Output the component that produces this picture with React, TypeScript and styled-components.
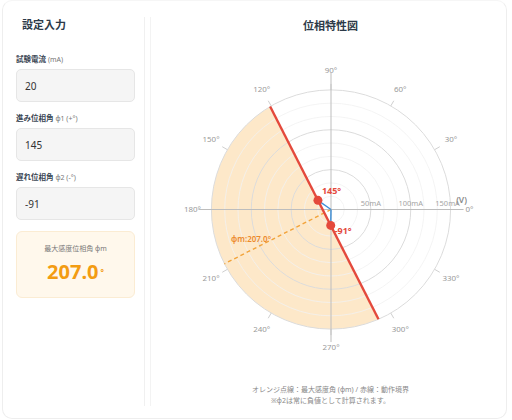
import React from 'react';
import styled, { createGlobalStyle } from 'styled-components';

const GlobalStyle = createGlobalStyle`
  html, body {
    margin: 0;
    padding: 0;
    background: #ffffff;
  }

  body {
    font-family: "Noto Sans", "Noto Sans CJK JP", sans-serif;
    color: #2d3a48;
  }
`;

const Card = styled.div`
  box-sizing: border-box;
  height: 419px;
  margin: 0 5px 0 2px;
  padding: 16px 0 12px;
  display: flex;
  border: 1px solid #eeeeee;
  border-top-color: #f6f6f6;
  border-radius: 10px;
`;

const Sidebar = styled.aside`
  box-sizing: border-box;
  width: 142px;
  padding: 0 9px 0 13px;
  border-right: 1px solid #f0f0f0;
  display: flex;
  flex-direction: column;
`;

const Heading = styled.h2`
  margin: 0 0 21px 6px;
  font-size: 11px;
  line-height: 16px;
  font-weight: 700;
  color: #2d3a48;
`;

const Field = styled.div`
  display: flex;
  flex-direction: column;
  gap: 4px;
  margin-bottom: 11px;
`;

const FieldLabel = styled.label`
  font-size: 7.5px;
  line-height: 10px;
  font-weight: 700;
  color: #3a4654;
`;

const Unit = styled.span`
  font-size: 7px;
  font-weight: 400;
  color: #777;
`;

const Input = styled.input`
  box-sizing: border-box;
  width: 100%;
  height: 33px;
  padding: 0 8px;
  border: 1px solid #e6e6e6;
  border-radius: 5px;
  background: #f5f5f5;
  font-family: "Noto Sans", "Noto Sans CJK JP", sans-serif;
  font-size: 10px;
  color: #333;
  outline: none;
`;

const ResultBox = styled.div`
  box-sizing: border-box;
  height: 67px;
  padding-top: 12px;
  border: 1px solid #fbecd3;
  border-radius: 6px;
  background: #fff8ec;
  display: flex;
  flex-direction: column;
  align-items: center;
  gap: 6px;
`;

const ResultCaption = styled.div`
  font-size: 7px;
  line-height: 10px;
  color: #7a7a7a;
`;

const ResultValue = styled.div`
  display: flex;
  align-items: center;
  font-size: 20px;
  line-height: 24px;
  font-weight: 700;
  color: #f39c12;
`;

const Degree = styled.span`
  font-size: 8px;
  margin-left: 2px;
`;

const ChartPanel = styled.section`
  box-sizing: border-box;
  flex: 1;
  margin-left: 5px;
  padding-left: 4px;
  border-left: 1px solid #f3f3f3;
  display: flex;
  flex-direction: column;
  align-items: center;
`;

const ChartTitle = styled.h2`
  margin: 1px 0 26px;
  font-size: 11px;
  line-height: 16px;
  font-weight: 700;
  color: #2d3a48;
`;

const Notes = styled.div`
  margin-top: 25px;
  display: flex;
  flex-direction: column;
  align-items: center;
`;

const NoteLine = styled.div`
  font-size: 7px;
  line-height: 11px;
  color: #888;
`;

const CX = 160;
const CY = 150;
const R = 120;
const MAX_MA = 150;

const pt = (deg: number, r: number) => {
  const rad = (deg * Math.PI) / 180;
  return { x: CX + r * Math.cos(rad), y: CY - r * Math.sin(rad) };
};

const PhaseChart: React.FC<{ current: number; phi1: number; phi2: number }> = ({ current, phi1, phi2 }) => {
  const scale = R / MAX_MA;
  const r0 = current * scale;
  const p2 = phi2 < 0 ? phi2 + 360 : phi2;
  const phiM = (phi1 + p2) / 2;

  const a = pt(phi1, r0);
  const b = pt(phi2, r0);

  // boundary chord through the two vector tips, clipped to the outer ring
  const d = r0 * Math.cos(((phi1 - p2) / 2) * Math.PI / 180);
  const half = (Math.acos(d / R) * 180) / Math.PI;
  const e1 = pt(phiM - half, R);
  const e2 = pt(phiM + half, R);
  const large = half * 2 > 180 ? 1 : 0;
  const shade = `M ${e1.x} ${e1.y} A ${R} ${R} 0 ${large} 0 ${e2.x} ${e2.y} Z`;

  const mEnd = pt(phiM, R);
  const mLabel = pt(phiM, 90);

  const minor = [1, 2, 4, 5, 7, 8].map((i) => (R / 9) * i);
  const angles = Array.from({ length: 12 }, (_, i) => i * 30);

  return (
    <svg width={320} height={300} viewBox="0 0 320 300">
      <path d={shade} fill="#fde8c9" />

      {minor.map((r) => (
        <circle key={r} cx={CX} cy={CY} r={r} fill="none" stroke="#f1f1f1" strokeWidth={0.8} />
      ))}
      {[40, 80, 120].map((r) => (
        <circle key={r} cx={CX} cy={CY} r={r} fill="none" stroke="#dcdcdc" strokeWidth={1} />
      ))}

      {angles.map((ang) => {
        const t1 = pt(ang, R);
        const t2 = pt(ang, R + 6);
        const lp = pt(ang, 139);
        return (
          <g key={ang}>
            <line x1={t1.x} y1={t1.y} x2={t2.x} y2={t2.y} stroke="#cfcfcf" strokeWidth={1} />
            <text
              x={lp.x}
              y={lp.y}
              textAnchor="middle"
              dominantBaseline="middle"
              fontSize={8}
              fill="#9a9a9a"
            >
              {ang}°
            </text>
          </g>
        );
      })}

      <line x1={CX - 133} y1={CY} x2={CX + 133} y2={CY} stroke="#bdbdbd" strokeWidth={1} />
      <line x1={CX} y1={CY - 137} x2={CX} y2={CY + 133} stroke="#bdbdbd" strokeWidth={1} />

      {[50, 100, 150].map((ma) => (
        <text key={ma} x={CX + ma * scale - (ma === 150 ? 3 : 0)} y={CY - 4} textAnchor="middle" fontSize={7.5} fill="#a5a5a5">
          {ma}mA
        </text>
      ))}
      <text x={CX + 131} y={CY - 7} textAnchor="middle" fontSize={8.5} fontWeight={600} fill="#8a8a8a">
        (V)
      </text>

      <line
        x1={CX}
        y1={CY}
        x2={mEnd.x}
        y2={mEnd.y}
        stroke="#f2a33a"
        strokeWidth={1.4}
        strokeDasharray="4 3"
      />
      <text x={mLabel.x} y={mLabel.y - 8} textAnchor="middle" fontSize={8} fontWeight={600} fill="#ec8a2c">
        φm:{phiM.toFixed(1)}°
      </text>

      <line x1={e1.x} y1={e1.y} x2={e2.x} y2={e2.y} stroke="#e4493c" strokeWidth={2.4} />

      <line x1={CX} y1={CY} x2={a.x} y2={a.y} stroke="#3d8fd8" strokeWidth={1.4} />
      <line x1={CX} y1={CY} x2={b.x} y2={b.y} stroke="#3d8fd8" strokeWidth={1.4} />

      <circle cx={a.x} cy={a.y} r={4.5} fill="#e4493c" />
      <circle cx={b.x} cy={b.y} r={4.5} fill="#e4493c" />
      <text x={a.x + 4} y={a.y - 6} fontSize={9} fontWeight={700} fill="#e4493c">
        {phi1}°
      </text>
      <text x={b.x + 4} y={b.y + 9} fontSize={9} fontWeight={700} fill="#e4493c">
        {phi2}°
      </text>
    </svg>
  );
};

const App: React.FC = () => {
  const current = 20;
  const phi1 = 145;
  const phi2 = -91;
  const phiM = (phi1 + (phi2 < 0 ? phi2 + 360 : phi2)) / 2;

  return (
    <>
      <GlobalStyle />
      <Card>
        <Sidebar>
          <Heading>設定入力</Heading>
          <Field>
            <FieldLabel>試験電流 <Unit>(mA)</Unit></FieldLabel>
            <Input defaultValue={current} />
          </Field>
          <Field>
            <FieldLabel>進み位相角 <Unit>φ1 (+°)</Unit></FieldLabel>
            <Input defaultValue={phi1} />
          </Field>
          <Field>
            <FieldLabel>遅れ位相角 <Unit>φ2 (-°)</Unit></FieldLabel>
            <Input defaultValue={phi2} />
          </Field>
          <ResultBox>
            <ResultCaption>最大感度位相角 φm</ResultCaption>
            <ResultValue>
              {phiM.toFixed(1)}
              <Degree>°</Degree>
            </ResultValue>
          </ResultBox>
        </Sidebar>
        <ChartPanel>
          <ChartTitle>位相特性図</ChartTitle>
          <PhaseChart current={current} phi1={phi1} phi2={phi2} />
          <Notes>
            <NoteLine>オレンジ点線：最大感度角 (φm) / 赤線：動作境界</NoteLine>
            <NoteLine>※φ2は常に負値として計算されます。</NoteLine>
          </Notes>
        </ChartPanel>
      </Card>
    </>
  );
};

export default App;
